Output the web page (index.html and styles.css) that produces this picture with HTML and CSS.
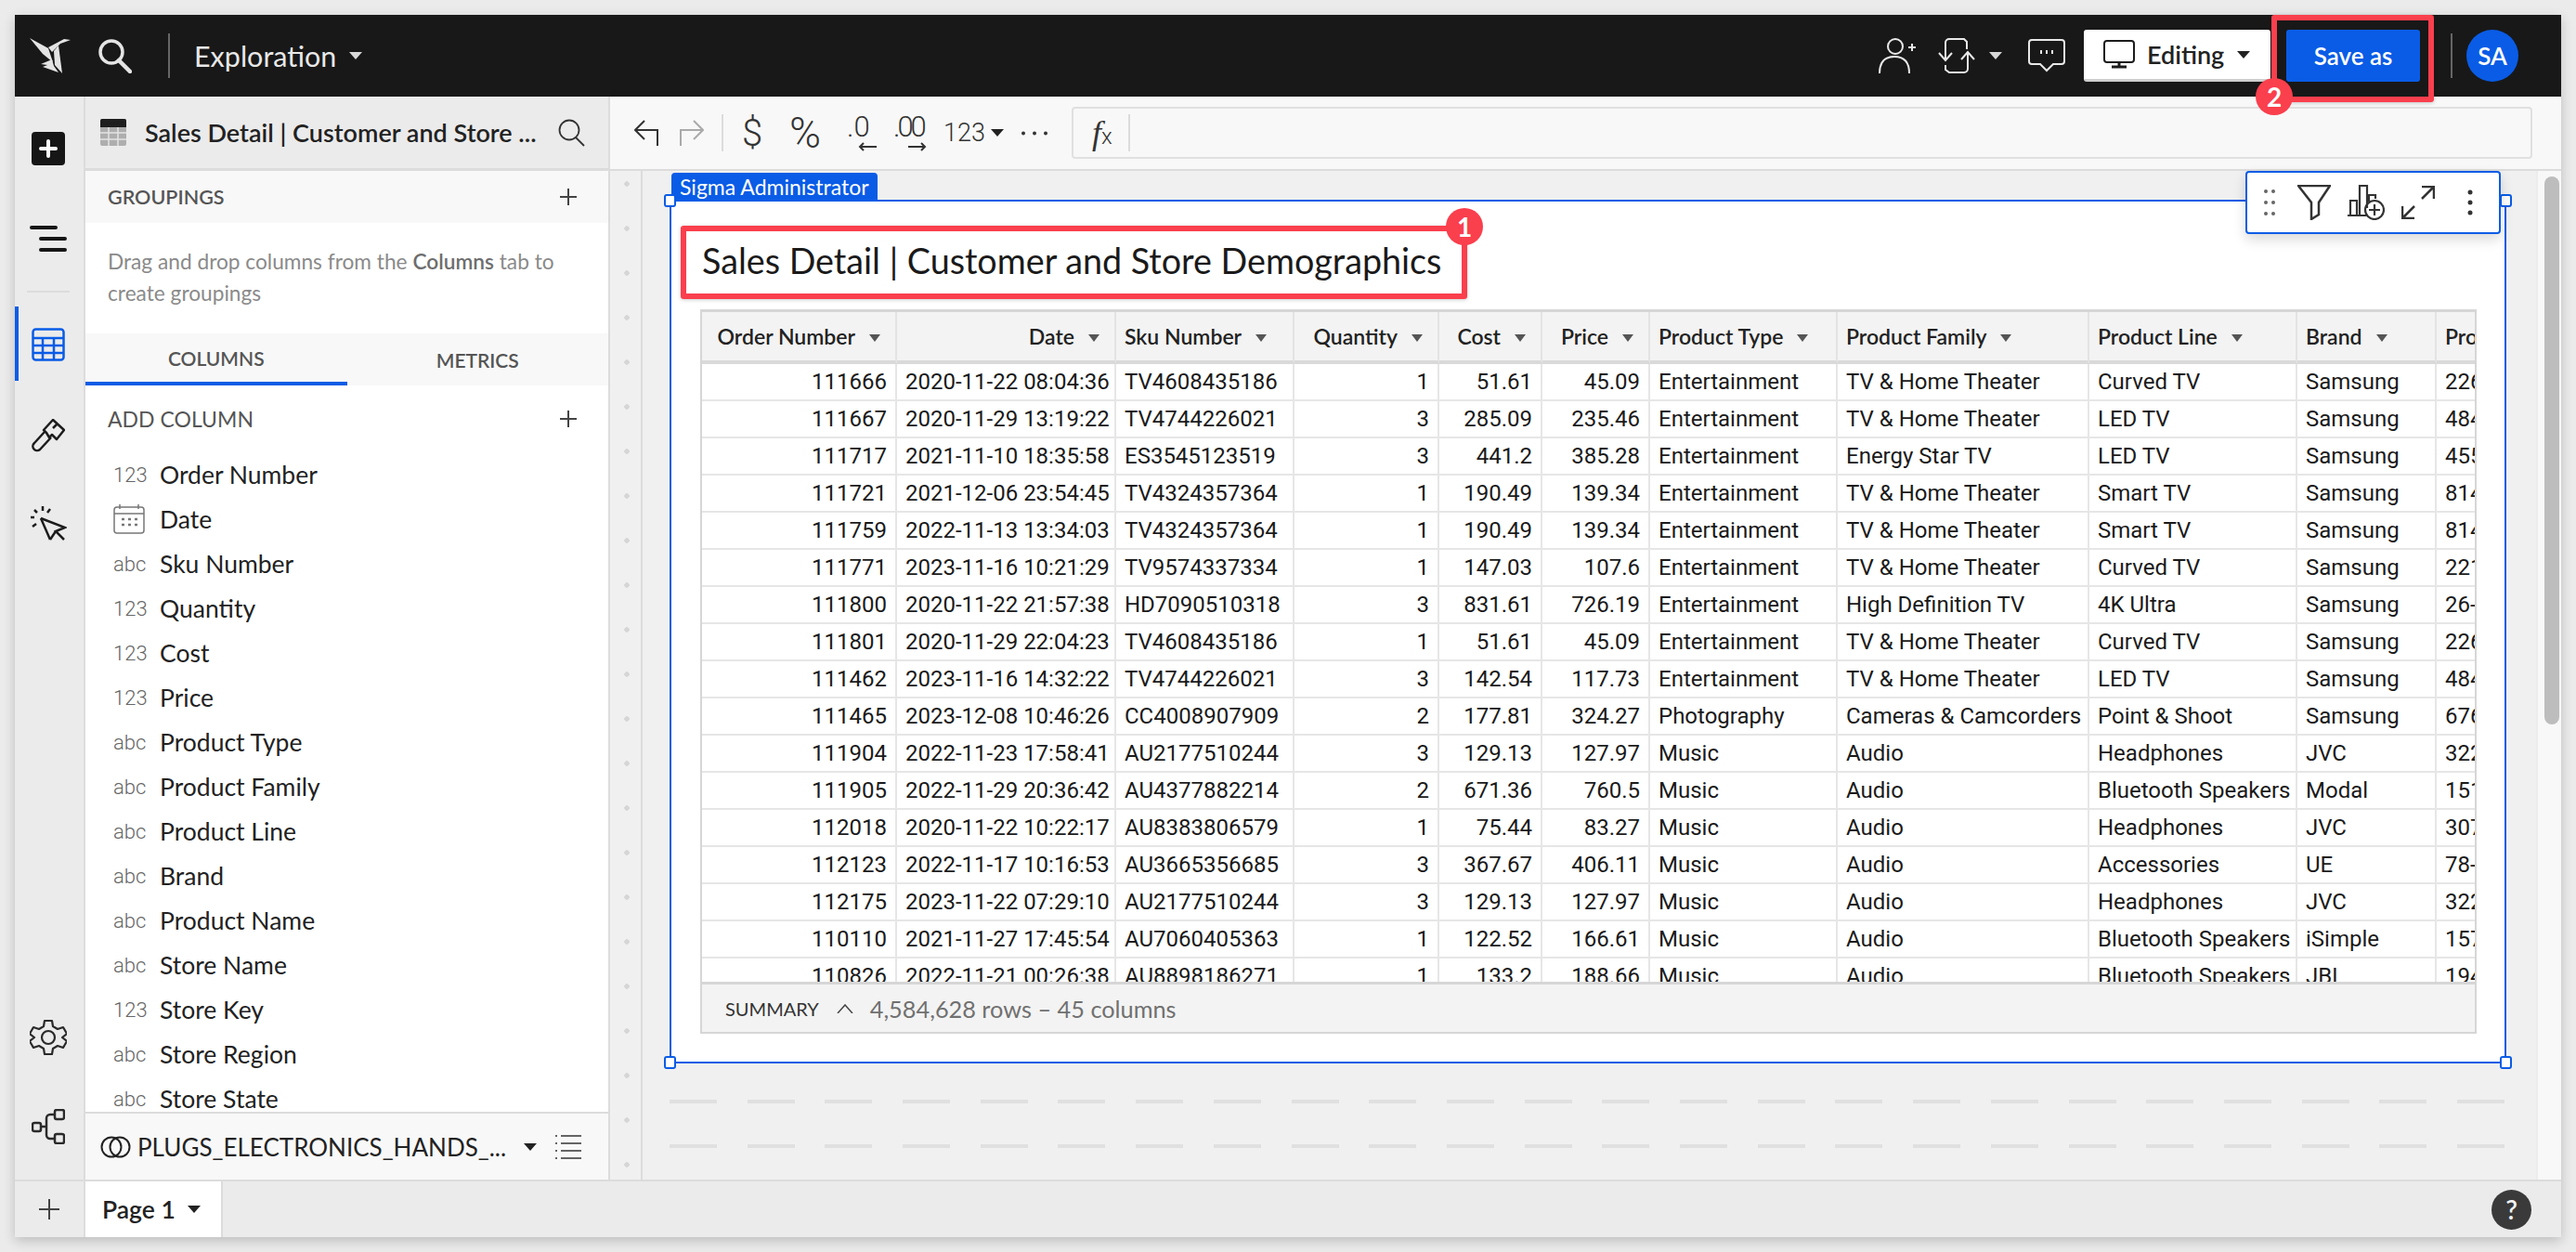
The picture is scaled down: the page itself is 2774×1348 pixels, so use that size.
FILE: index.html
```html
<!DOCTYPE html>
<html lang="en">
<head>
    <meta charset="UTF-8">
    <title>Sales Detail | Customer and Store Demographics</title>
    <link rel="stylesheet" href="styles.css">
</head>
<body>
<div class="window">
    <header class="topbar">
        <svg class="logo" width="45" height="40" viewBox="0 0 45 40" fill="#e4e4e4"><path d="M0 1 20 12 25 27 14 18Z"/><path d="M20 11 37 2 44 3 33 7 27 13 24 16Z"/><path d="M26 15 31 9 35 39 27 30Z"/><path d="M12 29 24 24 26 31 31 38 14 32 19 30Z"/></svg>
        <svg class="top-search" width="36" height="37" viewBox="0 0 36 37" fill="none" stroke="#e4e4e4"><circle cx="14" cy="14" r="12" stroke-width="3.5"/><path d="M22 23 34 35" stroke-width="4.5" stroke-linecap="round"/></svg>
        <span class="top-divider top-divider-left"></span>
        <span class="top-title">Exploration</span>
        <span class="caret caret-light top-title-caret"></span>
        <span class="top-spacer"></span>
        <svg width="40" height="38" viewBox="0 0 40 38" fill="none" stroke="#e8e8e8" stroke-width="2"><circle cx="18" cy="9" r="8"/><path d="M1 38C1 24 8 20 17 20S33 24 33 38M32 10h8M36 6v8"/></svg>
        <svg class="top-sync" width="40" height="40" viewBox="0 0 40 40" fill="none" stroke="#e8e8e8" stroke-width="2"><path d="M8 24V6a4 4 0 0 1 4-4h16l3 3v8M1 17l7 8 7-8"/><path d="M32 17v17a4 4 0 0 1-4 4H12l-4-3v-5M25 24l7-8 7 8"/></svg>
        <span class="caret caret-light top-sync-caret"></span>
        <svg class="top-comment" width="40" height="36" viewBox="0 0 40 36" fill="none" stroke="#e8e8e8" stroke-width="2"><path d="M4 1h32a3 3 0 0 1 3 3v20a3 3 0 0 1-3 3H27l-7 7-7-7H4a3 3 0 0 1-3-3V4a3 3 0 0 1 3-3Z"/><path d="M13 14h2M19 14h2M25 14h2" stroke-width="4"/></svg>
        <button class="editing-btn">
            <svg width="34" height="31" viewBox="0 0 34 31" fill="none" stroke="#1c1c1c"><rect x="1" y="1" width="32" height="23" rx="3" stroke-width="2"/><path d="M17 24v4M9 29h16" stroke-width="3"/></svg>
            <span class="editing-label">Editing</span>
            <span class="caret caret-dark"></span>
        </button>
        <button class="save-btn">Save as</button>
        <span class="top-divider top-divider-right"></span>
        <span class="avatar">SA</span>
        <div class="callout callout-save"><span class="badge badge-save">2</span></div>
    </header>

    <div class="main">
        <nav class="rail">
            <span class="rail-active"></span>
            <svg class="rail-plus" width="36" height="36" viewBox="0 0 36 36"><rect width="36" height="36" rx="4" fill="#161616"/><path d="M18 10v16M10 18h16" stroke="#fff" stroke-width="4" stroke-linecap="round"/></svg>
            <svg class="rail-outline" width="40" height="28" viewBox="0 0 40 28" stroke="#161616" stroke-width="4" stroke-linecap="round"><path d="M2 2h26M12 14h26M12 26h26"/></svg>
            <span class="rail-sep"></span>
            <svg class="rail-table" width="36" height="36" viewBox="0 0 36 36" fill="none" stroke="#0a5ce6" stroke-width="2.5"><rect x="1.5" y="1.5" width="33" height="33" rx="3"/><path d="M1.500 11h33M1.500 19h33M1.500 27h33M12 11v24M24 11v24"/></svg>
            <svg class="rail-brush" width="36" height="36" viewBox="0 0 36 36" fill="none" stroke="#1c1c1c" stroke-width="2.500" stroke-linejoin="round"><path d="M23 1 35 12 27 22 22 17 19 20 16 15 13 12Z"/><path d="M14 14 3 26a4 4 0 0 0 6 7L21 20"/><path d="M23 10 28 5"/></svg>
            <svg class="rail-cursor" width="40" height="38" viewBox="0 0 40 38" fill="none" stroke="#1c1c1c" stroke-width="2.500"><path d="M12 14 38 24 28 28 37 37M28 28 22 37Z"/><path d="M12 14 22 37M1 13h4M3 23l4-3M5 5l3 3M14 1v5M22 4l-3 4"/></svg>
            <span class="rail-spacer"></span>
            <svg class="rail-gear" width="40" height="40" viewBox="0 0 40 40" fill="none" stroke="#2a2a2a" stroke-width="2.200" stroke-linejoin="round"><circle cx="20" cy="20" r="7"/><path d="M16 2h8l1 6 5 3 6-2 4 7-5 4 0 0 5 4-4 7-6-2-5 3-1 6h-8l-1-6-5-3-6 2-4-7 5-4-5-4 4-7 6 2 5-3Z"/></svg>
            <svg class="rail-tree" width="36" height="38" viewBox="0 0 36 38" fill="none" stroke="#2a2a2a" stroke-width="2.500"><rect x="1" y="15" width="9" height="9" rx="2"/><rect x="25" y="1" width="10" height="10" rx="2"/><rect x="25" y="27" width="10" height="10" rx="2"/><path d="M10 19h6M25 6h-5a4 4 0 0 0-4 4v18a4 4 0 0 0 4 4h5"/></svg>
        </nav>

        <aside class="panel">
            <div class="panel-head">
                <svg width="28" height="29" viewBox="0 0 28 29"><rect width="28" height="29" rx="2" fill="#aeaeae"/><path d="M0 2a2 2 0 0 1 2-2h24a2 2 0 0 1 2 2v7H0Z" fill="#1f1f1f"/><path d="M0 15h28M0 22h28M9 9v20M19 9v20" stroke="#e4e4e4" stroke-width="1.500"/></svg>
                <span class="panel-title">Sales Detail | Customer and Store ...</span>
                <svg width="29" height="30" viewBox="0 0 29 30" fill="none" stroke="#333" stroke-width="1.800"><circle cx="12" cy="12" r="10.500"/><path d="M19 20 28 29"/></svg>
            </div>
            <div class="section-head">
                <span class="section-label">GROUPINGS</span>
                <span class="plus"></span>
            </div>
            <p class="groupings-help">Drag and drop columns from the <b>Columns</b> tab to create groupings</p>
            <div class="tabs">
                <span class="tab tab-active">COLUMNS</span>
                <span class="tab">METRICS</span>
            </div>
            <div class="add-column">
                <span class="add-label">ADD COLUMN</span>
                <span class="plus"></span>
            </div>
            <ul class="fields">
                <li><span class="type">123</span>Order Number</li>
                <li><svg class="type-date" width="34" height="32" viewBox="0 0 34 32" fill="none" stroke="#777" stroke-width="1.500"><rect x="1" y="3" width="32" height="28" rx="3"/><path d="M1 10h32M7 0v5M27 0v5"/><path d="M9 16h3M16 16h3M23 16h3M9 22h3M16 22h3M23 22h3" stroke-width="2.500"/></svg>Date</li>
                <li><span class="type">abc</span>Sku Number</li>
                <li><span class="type">123</span>Quantity</li>
                <li><span class="type">123</span>Cost</li>
                <li><span class="type">123</span>Price</li>
                <li><span class="type">abc</span>Product Type</li>
                <li><span class="type">abc</span>Product Family</li>
                <li><span class="type">abc</span>Product Line</li>
                <li><span class="type">abc</span>Brand</li>
                <li><span class="type">abc</span>Product Name</li>
                <li><span class="type">abc</span>Store Name</li>
                <li><span class="type">123</span>Store Key</li>
                <li><span class="type">abc</span>Store Region</li>
                <li><span class="type">abc</span>Store State</li>
            </ul>
            <div class="source-bar">
                <svg width="33" height="24" viewBox="0 0 33 24" fill="none" stroke="#222" stroke-width="2"><circle cx="12" cy="12" r="10.500"/><circle cx="21" cy="12" r="10.500"/></svg>
                <span class="source-name">PLUGS_ELECTRONICS_HANDS_...</span>
                <span class="caret caret-dark"></span>
                <svg class="source-list" width="28" height="28" viewBox="0 0 28 28" stroke="#333" stroke-width="1.500"><path d="M6 2h22M6 10h22M6 18h22M6 26h22M0 2h2M0 10h2M0 18h2M0 26h2"/></svg>
            </div>
        </aside>

        <section class="work">
            <div class="toolbar">
                <svg width="26" height="28" viewBox="0 0 26 28" fill="none" stroke="#333" stroke-width="2"><path d="M25 28V11H2M11 1 1 11l10 10"/></svg>
                <svg class="tb-redo" width="26" height="28" viewBox="0 0 26 28" fill="none" stroke="#aaa" stroke-width="2"><path d="M1 28V11h23M15 1l10 10-10 10"/></svg>
                <span class="tb-divider"></span>
                <span class="tb-dollar">$</span>
                <span class="tb-percent">%</span>
                <span class="tb-dec tb-dec-less">.0<svg width="20" height="10" viewBox="0 0 20 10" fill="none" stroke="#333" stroke-width="2"><path d="M20 5H2M6 1 2 5l4 4"/></svg></span>
                <span class="tb-dec tb-dec-more">.00<svg width="20" height="10" viewBox="0 0 20 10" fill="none" stroke="#333" stroke-width="2"><path d="M0 5h18M14 1l4 4-4 4"/></svg></span>
                <span class="tb-format">123</span>
                <span class="caret caret-dark tb-format-caret"></span>
                <svg class="tb-more" width="30" height="5" viewBox="0 0 30 5" fill="#333"><circle cx="3" cy="2.500" r="2"/><circle cx="15" cy="2.500" r="2"/><circle cx="27" cy="2.500" r="2"/></svg>
                <div class="formula">
                    <span class="fx"><i>f</i>x</span>
                    <span class="fx-divider"></span>
                </div>
            </div>
            <div class="canvas-row">
                <div class="ruler"></div>
                <div class="canvas">
                    <div class="element">
                        <span class="owner-label">Sigma Administrator</span>
                        <span class="handle handle-tl"></span>
                        <span class="handle handle-tr"></span>
                        <span class="handle handle-bl"></span>
                        <span class="handle handle-br"></span>
                        <div class="float-tools">
                            <svg class="ft-drag" width="12" height="28" viewBox="0 0 12 28" fill="#666"><circle cx="2" cy="2" r="2"/><circle cx="10" cy="2" r="2"/><circle cx="2" cy="14" r="2"/><circle cx="10" cy="14" r="2"/><circle cx="2" cy="26" r="2"/><circle cx="10" cy="26" r="2"/></svg>
                            <svg class="ft-filter" width="36" height="38" viewBox="0 0 36 38" fill="none" stroke="#333" stroke-width="2.500"><path d="M1 1h34L23 19v13l-8 5V19Z"/></svg>
                            <svg class="ft-chart" width="40" height="38" viewBox="0 0 40 38" fill="none" stroke="#333" stroke-width="2.200"><path d="M0 33h20M3 33V17h7v16M13 33V1h8v24M23 18V11h7v4"/><circle cx="29" cy="27" r="10"/><path d="M29 21v12M23 27h12"/></svg>
                            <svg class="ft-expand" width="36" height="36" viewBox="0 0 36 36" fill="none" stroke="#333" stroke-width="2.500"><path d="M22 14 35 1M22 1h13v13M14 22 1 35M1 22v13h13"/></svg>
                            <svg class="ft-kebab" width="6" height="28" viewBox="0 0 6 28" fill="#333"><circle cx="3" cy="3" r="2.500"/><circle cx="3" cy="14" r="2.500"/><circle cx="3" cy="25" r="2.500"/></svg>
                        </div>
                        <h1 class="element-title">Sales Detail | Customer and Store Demographics</h1>
                        <div class="callout callout-title"><span class="badge badge-title">1</span></div>
                        <div class="widget">
                            <div class="grid">
                                <table>
                                    <colgroup><col class="c-order"><col class="c-date"><col class="c-sku"><col class="c-qty"><col class="c-cost"><col class="c-price"><col class="c-type"><col class="c-family"><col class="c-line"><col class="c-brand"><col class="c-name"></colgroup>
                                    <thead>
                                        <tr>
                                            <th class="num">Order Number<span class="caret caret-gray"></span></th>
                                            <th class="num">Date<span class="caret caret-gray"></span></th>
                                            <th>Sku Number<span class="caret caret-gray"></span></th>
                                            <th class="num">Quantity<span class="caret caret-gray"></span></th>
                                            <th class="num">Cost<span class="caret caret-gray"></span></th>
                                            <th class="num">Price<span class="caret caret-gray"></span></th>
                                            <th>Product Type<span class="caret caret-gray"></span></th>
                                            <th>Product Family<span class="caret caret-gray"></span></th>
                                            <th>Product Line<span class="caret caret-gray"></span></th>
                                            <th>Brand<span class="caret caret-gray"></span></th>
                                            <th>Product Name</th>
                                        </tr>
                                    </thead>
                                    <tbody>
                                        <tr><td class="num">111666</td><td class="num">2020-11-22 08:04:36</td><td>TV4608435186</td><td class="num">1</td><td class="num">51.61</td><td class="num">45.09</td><td>Entertainment</td><td>TV &amp; Home Theater</td><td>Curved TV</td><td>Samsung</td><td>2260</td></tr>
                                        <tr><td class="num">111667</td><td class="num">2020-11-29 13:19:22</td><td>TV4744226021</td><td class="num">3</td><td class="num">285.09</td><td class="num">235.46</td><td>Entertainment</td><td>TV &amp; Home Theater</td><td>LED TV</td><td>Samsung</td><td>4844</td></tr>
                                        <tr><td class="num">111717</td><td class="num">2021-11-10 18:35:58</td><td>ES3545123519</td><td class="num">3</td><td class="num">441.2</td><td class="num">385.28</td><td>Entertainment</td><td>Energy Star TV</td><td>LED TV</td><td>Samsung</td><td>4555</td></tr>
                                        <tr><td class="num">111721</td><td class="num">2021-12-06 23:54:45</td><td>TV4324357364</td><td class="num">1</td><td class="num">190.49</td><td class="num">139.34</td><td>Entertainment</td><td>TV &amp; Home Theater</td><td>Smart TV</td><td>Samsung</td><td>8144</td></tr>
                                        <tr><td class="num">111759</td><td class="num">2022-11-13 13:34:03</td><td>TV4324357364</td><td class="num">1</td><td class="num">190.49</td><td class="num">139.34</td><td>Entertainment</td><td>TV &amp; Home Theater</td><td>Smart TV</td><td>Samsung</td><td>8144</td></tr>
                                        <tr><td class="num">111771</td><td class="num">2023-11-16 10:21:29</td><td>TV9574337334</td><td class="num">1</td><td class="num">147.03</td><td class="num">107.6</td><td>Entertainment</td><td>TV &amp; Home Theater</td><td>Curved TV</td><td>Samsung</td><td>2217</td></tr>
                                        <tr><td class="num">111800</td><td class="num">2020-11-22 21:57:38</td><td>HD7090510318</td><td class="num">3</td><td class="num">831.61</td><td class="num">726.19</td><td>Entertainment</td><td>High Definition TV</td><td>4K Ultra</td><td>Samsung</td><td>26-6</td></tr>
                                        <tr><td class="num">111801</td><td class="num">2020-11-29 22:04:23</td><td>TV4608435186</td><td class="num">1</td><td class="num">51.61</td><td class="num">45.09</td><td>Entertainment</td><td>TV &amp; Home Theater</td><td>Curved TV</td><td>Samsung</td><td>2260</td></tr>
                                        <tr><td class="num">111462</td><td class="num">2023-11-16 14:32:22</td><td>TV4744226021</td><td class="num">3</td><td class="num">142.54</td><td class="num">117.73</td><td>Entertainment</td><td>TV &amp; Home Theater</td><td>LED TV</td><td>Samsung</td><td>4844</td></tr>
                                        <tr><td class="num">111465</td><td class="num">2023-12-08 10:46:26</td><td>CC4008907909</td><td class="num">2</td><td class="num">177.81</td><td class="num">324.27</td><td>Photography</td><td>Cameras &amp; Camcorders</td><td>Point &amp; Shoot</td><td>Samsung</td><td>6760</td></tr>
                                        <tr><td class="num">111904</td><td class="num">2022-11-23 17:58:41</td><td>AU2177510244</td><td class="num">3</td><td class="num">129.13</td><td class="num">127.97</td><td>Music</td><td>Audio</td><td>Headphones</td><td>JVC</td><td>3222</td></tr>
                                        <tr><td class="num">111905</td><td class="num">2022-11-29 20:36:42</td><td>AU4377882214</td><td class="num">2</td><td class="num">671.36</td><td class="num">760.5</td><td>Music</td><td>Audio</td><td>Bluetooth Speakers</td><td>Modal</td><td>1511</td></tr>
                                        <tr><td class="num">112018</td><td class="num">2020-11-22 10:22:17</td><td>AU8383806579</td><td class="num">1</td><td class="num">75.44</td><td class="num">83.27</td><td>Music</td><td>Audio</td><td>Headphones</td><td>JVC</td><td>3077</td></tr>
                                        <tr><td class="num">112123</td><td class="num">2022-11-17 10:16:53</td><td>AU3665356685</td><td class="num">3</td><td class="num">367.67</td><td class="num">406.11</td><td>Music</td><td>Audio</td><td>Accessories</td><td>UE</td><td>78-1</td></tr>
                                        <tr><td class="num">112175</td><td class="num">2023-11-22 07:29:10</td><td>AU2177510244</td><td class="num">3</td><td class="num">129.13</td><td class="num">127.97</td><td>Music</td><td>Audio</td><td>Headphones</td><td>JVC</td><td>3222</td></tr>
                                        <tr><td class="num">110110</td><td class="num">2021-11-27 17:45:54</td><td>AU7060405363</td><td class="num">1</td><td class="num">122.52</td><td class="num">166.61</td><td>Music</td><td>Audio</td><td>Bluetooth Speakers</td><td>iSimple</td><td>1577</td></tr>
                                        <tr><td class="num">110826</td><td class="num">2022-11-21 00:26:38</td><td>AU8898186271</td><td class="num">1</td><td class="num">133.2</td><td class="num">188.66</td><td>Music</td><td>Audio</td><td>Bluetooth Speakers</td><td>JBL</td><td>1944</td></tr>
                                    </tbody>
                                </table>
                            </div>
                            <div class="summary">
                                <span class="summary-label">SUMMARY</span>
                                <svg class="summary-chevron" width="18" height="10" viewBox="0 0 18 10" fill="none" stroke="#444" stroke-width="1.500"><path d="M1 10 9 1l8 9"/></svg>
                                <span class="summary-count">4,584,628 rows – 45 columns</span>
                            </div>
                        </div>
                    </div>
                    <div class="empty-row"></div>
                    <div class="empty-row"></div>
                </div>
                <div class="scroll-strip"><span class="scroll-thumb"></span></div>
            </div>
        </section>
    </div>

    <footer class="tabbar">
        <span class="add-page"><span class="plus plus-large"></span></span>
        <span class="page-tab">Page 1<span class="caret caret-dark"></span></span>
        <span class="help">?</span>
    </footer>
</div>
</body>
</html>
```

FILE: styles.css
```css
* {
    box-sizing: border-box;
}
html, body {
    height: 100%;
}
body {
    margin: 0;
    padding: 16px;
    background-color: #ebebeb;
    color: #1a1a1a;
    font-family: "Lato", "Noto Sans", sans-serif;
    overflow: hidden;
}
svg {
    display: block;
    flex: none;
}

.window {
    height: 1316px;
    display: flex;
    flex-direction: column;
    background-color: #ebebeb;
    box-shadow: 0 4px 12px rgba(0, 0, 0, 0.2);
}

/* carets */
.caret {
    display: inline-block;
    flex: none;
    width: 0;
    height: 0;
    border-left: 7px solid transparent;
    border-right: 7px solid transparent;
    border-top: 8px solid #222;
}
.caret-light {
    border-top-color: #d8d8d8;
}
.caret-gray {
    border-left-width: 6px;
    border-right-width: 6px;
    border-top-color: #555;
    margin-left: 15px;
    vertical-align: 3px;
}

/* top bar */
.topbar {
    height: 88px;
    flex: none;
    display: flex;
    align-items: center;
    padding: 0 46px 0 16px;
    background-color: #181818;
    position: relative;
}
.top-search {
    margin-left: 29px;
}
.top-divider {
    width: 2px;
    height: 48px;
    background-color: #666;
}
.top-divider-left {
    margin-left: 39px;
}
.top-divider-right {
    margin-left: 33px;
}
.top-title {
    margin-left: 26px;
    font-size: 30.5px;
    color: #e8e8e8;
}
.top-title-caret {
    margin-left: 14px;
}
.top-spacer {
    flex: 1;
}
.top-sync {
    margin-left: 24px;
}
.top-sync-caret {
    margin-left: 15px;
}
.top-comment {
    margin-left: 28px;
}
.editing-btn {
    width: 201px;
    height: 56px;
    margin-left: 20px;
    padding: 0 0 0 21px;
    display: flex;
    align-items: center;
    background-color: #fff;
    border: none;
    border-bottom: 3px solid #cfcfcf;
    border-radius: 3px;
    font-family: inherit;
}
.editing-label {
    margin-left: 13px;
    margin-right: 14px;
    font-size: 27px;
    font-weight: 600;
    color: #222;
}
.save-btn {
    width: 144px;
    height: 56px;
    margin-left: 17px;
    background-color: #0a5ce6;
    border: none;
    border-radius: 3px;
    color: #fff;
    font-family: inherit;
    font-size: 26px;
    font-weight: 600;
}
.avatar {
    width: 56px;
    height: 56px;
    margin-left: 15px;
    display: flex;
    align-items: center;
    justify-content: center;
    border-radius: 50%;
    background-color: #0a5ce6;
    color: #fff;
    font-size: 26px;
    font-weight: 600;
}

/* red annotations */
.callout {
    position: absolute;
    border: 6px solid #fa3f4d;
    border-radius: 3px;
    box-shadow: 0 1px 4px rgba(0, 0, 0, 0.2);
    z-index: 5;
}
.callout-save {
    left: 2430px;
    top: 0;
    width: 175px;
    height: 94px;
}
.callout-title {
    left: 10px;
    top: 26px;
    width: 847px;
    height: 79px;
}
.badge {
    position: absolute;
    width: 40px;
    height: 40px;
    display: flex;
    align-items: center;
    justify-content: center;
    border-radius: 50%;
    background-color: #fa3f4d;
    color: #fff;
    font-size: 28px;
    font-weight: 700;
}
.badge-save {
    left: -23px;
    top: 62px;
}
.badge-title {
    right: -23px;
    top: -25px;
}

/* main */
.main {
    flex: 1;
    min-height: 0;
    display: flex;
}
.rail {
    width: 76px;
    flex: none;
    display: flex;
    flex-direction: column;
    align-items: center;
    position: relative;
    padding-right: 2px;
    background-color: #ebebeb;
    border-right: 2px solid #dcdcdc;
}
.rail-active {
    position: absolute;
    left: 0;
    top: 226px;
    width: 4px;
    height: 80px;
    background-color: #0a5ce6;
}
.rail-plus {
    margin-top: 38px;
}
.rail-outline {
    margin-top: 65px;
}
.rail-sep {
    width: 46px;
    height: 2px;
    margin-top: 42px;
    background-color: #dcdcdc;
}
.rail-table {
    margin-top: 38px;
}
.rail-brush {
    margin-top: 62px;
}
.rail-cursor {
    margin-top: 57px;
}
.rail-spacer {
    flex: 1;
}
.rail-tree {
    margin-top: 57px;
    margin-bottom: 38px;
}

/* side panel */
.panel {
    width: 565px;
    flex: none;
    display: flex;
    flex-direction: column;
    background-color: #fff;
    border-right: 2px solid #dcdcdc;
}
.panel-head {
    height: 80px;
    flex: none;
    display: flex;
    align-items: center;
    padding: 0 25px 0 16px;
    background-color: #ebebeb;
    border-bottom: 3px solid #dcdcdc;
}
.panel-title {
    flex: 1;
    margin-left: 20px;
    font-size: 27px;
    font-weight: 600;
    white-space: nowrap;
    color: #222;
}
.section-head {
    height: 56px;
    flex: none;
    display: flex;
    align-items: center;
    justify-content: space-between;
    padding: 0 34px 0 24px;
    background-color: #f8f8f8;
}
.section-label {
    font-size: 21.5px;
    font-weight: 600;
    color: #555;
}
.plus {
    display: block;
    flex: none;
    width: 18px;
    height: 18px;
    background:
        linear-gradient(#444, #444) center / 100% 2px no-repeat,
        linear-gradient(#444, #444) center / 2px 100% no-repeat;
}
.plus-large {
    width: 22px;
    height: 22px;
}
.groupings-help {
    height: 119px;
    flex: none;
    margin: 0;
    padding: 25px 24px 0;
    font-size: 22.7px;
    line-height: 34px;
    color: #8a8a8a;
}
.groupings-help b {
    color: #6e6e6e;
    font-weight: 600;
}
.tabs {
    height: 56px;
    flex: none;
    display: flex;
    background-color: #f8f8f8;
}
.tab {
    width: 282px;
    display: flex;
    align-items: center;
    justify-content: center;
    font-size: 21px;
    font-weight: 600;
    color: #555;
}
.tab-active {
    border-bottom: 4px solid #0a5ce6;
}
.add-column {
    height: 72px;
    flex: none;
    display: flex;
    align-items: center;
    justify-content: space-between;
    padding: 0 34px 0 24px;
}
.add-label {
    font-size: 23px;
    color: #555;
}
.fields {
    flex: 1;
    min-height: 0;
    margin: 0;
    padding: 0 0 0 30px;
    list-style: none;
    overflow: hidden;
}
.fields li {
    height: 48px;
    display: flex;
    align-items: center;
    font-size: 26.5px;
    color: #222;
}
.type {
    width: 50px;
    flex: none;
    font-family: "Roboto", sans-serif;
    font-size: 22px;
    font-weight: 300;
    color: #666;
}
.type-date {
    margin-right: 16px;
}
.source-bar {
    height: 73px;
    flex: none;
    display: flex;
    align-items: center;
    padding: 0 0 0 16px;
    background-color: #f8f8f8;
    border-top: 2px solid #dcdcdc;
}
.source-name {
    width: 416px;
    margin-left: 7px;
    font-size: 26px;
    white-space: nowrap;
    color: #222;
}
.source-list {
    margin-left: 20px;
}

/* work area */
.work {
    flex: 1;
    min-width: 0;
    display: flex;
    flex-direction: column;
}
.toolbar {
    height: 80px;
    flex: none;
    display: flex;
    align-items: center;
    padding: 0 31px 0 26px;
    background-color: #f8f8f8;
    border-bottom: 2px solid #dcdcdc;
    color: #333;
}
.tb-redo {
    margin-left: 23px;
}
.tb-divider {
    width: 2px;
    height: 40px;
    margin-left: 19px;
    background-color: #dcdcdc;
}
.tb-dollar {
    margin-left: 20px;
    width: 22px;
    font-family: "Roboto", sans-serif;
    font-size: 40px;
    font-weight: 300;
    text-align: center;
}
.tb-percent {
    margin-left: 28px;
    width: 36px;
    font-family: "Roboto", sans-serif;
    font-size: 46px;
    font-weight: 300;
    text-align: center;
}
.tb-dec {
    display: flex;
    flex-direction: column;
    align-items: flex-start;
    height: 44px;
    font-family: "Roboto", sans-serif;
    font-size: 31px;
    font-weight: 300;
    line-height: 32px;
}
.tb-dec svg {
    align-self: flex-end;
}
.tb-dec-less {
    margin-left: 27px;
    width: 32px;
}
.tb-dec-more {
    margin-left: 18px;
    width: 36px;
    letter-spacing: -3px;
}
.tb-format {
    margin-left: 18px;
    font-family: "Roboto", sans-serif;
    font-size: 27px;
    font-weight: 300;
}
.tb-format-caret {
    margin-left: 6px;
}
.tb-more {
    margin-left: 18px;
}
.formula {
    flex: 1;
    height: 56px;
    margin-left: 25px;
    display: flex;
    align-items: center;
    padding-left: 20px;
    border: 2px solid #e0e0e0;
    border-radius: 4px;
}
.fx {
    width: 23px;
    font-family: "Roboto", sans-serif;
    font-size: 24px;
    font-weight: 300;
    white-space: nowrap;
}
.fx i {
    font-family: "Liberation Serif", serif;
    font-size: 36px;
}
.fx-divider {
    width: 2px;
    height: 40px;
    margin-left: 16px;
    background-color: #dcdcdc;
}

/* canvas */
.canvas-row {
    flex: 1;
    min-height: 0;
    display: flex;
}
.ruler {
    width: 35px;
    flex: none;
    background-color: #f0f0f0;
    background-image: radial-gradient(circle at 18px 14px, #d6d6d6 2.5px, transparent 3px);
    background-size: 100% 48px;
    border-right: 2px solid #dcdcdc;
}
.canvas {
    flex: 1;
    min-width: 0;
    padding: 31px 32px 0 29px;
    background-color: #f0f0f0;
    position: relative;
}
.element {
    height: 930px;
    position: relative;
    margin-bottom: 39px;
    padding: 0 30px 0 31px;
    background-color: #fff;
    border: 2px solid #0a5ce6;
}
.owner-label {
    position: absolute;
    left: 0;
    top: -31px;
    height: 30px;
    padding: 0 9px;
    display: flex;
    align-items: center;
    border-radius: 4px 4px 0 0;
    background-color: #0a5ce6;
    color: #fff;
    font-size: 23px;
}
.handle {
    position: absolute;
    width: 13px;
    height: 14px;
    background-color: #fff;
    border: 2px solid #0a5ce6;
    border-radius: 3px;
}
.handle-tl {
    left: -8px;
    top: -8px;
}
.handle-tr {
    right: -8px;
    top: -8px;
}
.handle-bl {
    left: -8px;
    bottom: -8px;
}
.handle-br {
    right: -8px;
    bottom: -8px;
}
.float-tools {
    position: absolute;
    right: 4px;
    top: -33px;
    width: 275px;
    height: 68px;
    display: flex;
    align-items: center;
    padding-left: 18px;
    background-color: #fff;
    border: 2px solid #0a5ce6;
    border-radius: 4px;
    box-shadow: 0 6px 14px rgba(0, 0, 0, 0.15);
    z-index: 3;
}
.ft-filter {
    margin-left: 24px;
}
.ft-chart {
    margin-left: 18px;
}
.ft-expand {
    margin-left: 18px;
}
.ft-kebab {
    margin-left: 35px;
}
.element-title {
    height: 116px;
    margin: 0;
    padding: 37px 0 0 2px;
    font-size: 37.7px;
    font-weight: 400;
    line-height: 54px;
    color: #1a1a1a;
    white-space: nowrap;
}

/* table widget */
.widget {
    height: 780px;
    display: flex;
    flex-direction: column;
    border: 2px solid #d6d6d6;
    border-top-width: 3px;
}
.grid {
    flex: 1;
    min-height: 0;
    overflow: hidden;
}
table {
    width: 2118px;
    table-layout: fixed;
    border-collapse: separate;
    border-spacing: 0;
}
.c-order { width: 210px; }
.c-date { width: 236px; }
.c-sku { width: 192px; }
.c-qty { width: 156px; }
.c-cost { width: 111px; }
.c-price { width: 116px; }
.c-type { width: 202px; }
.c-family { width: 271px; }
.c-line { width: 224px; }
.c-brand { width: 150px; }
.c-name { width: 250px; }
th {
    height: 56px;
    padding: 0 16px 0 9px;
    background-color: #f3f3f3;
    border-right: 2px solid #e3e3e3;
    border-bottom: 4px solid #d9d9d9;
    font-size: 23px;
    font-weight: 600;
    text-align: left;
    white-space: nowrap;
    color: #222;
}
td {
    height: 40px;
    padding: 0 9px;
    border-right: 2px solid #e6e6e6;
    border-bottom: 2px solid #e6e6e6;
    font-family: "Roboto", sans-serif;
    font-size: 24px;
    white-space: nowrap;
    overflow: hidden;
    color: #1a1a1a;
}
th.num {
    text-align: right;
}
td.num {
    text-align: right;
}
.summary {
    height: 54px;
    flex: none;
    display: flex;
    align-items: center;
    padding-left: 25px;
    background-color: #f3f3f3;
    border-top: 3px solid #d6d6d6;
}
.summary-label {
    font-size: 20px;
    color: #333;
}
.summary-chevron {
    margin-left: 19px;
}
.summary-count {
    margin-left: 18px;
    font-size: 25.3px;
    color: #707070;
}
.empty-row {
    height: 48px;
    margin-right: -2px;
    background-image: repeating-linear-gradient(to right, #e0e0e0 0, #e0e0e0 51px, transparent 51px, transparent 83.7px);
    background-size: 100% 4px;
    background-repeat: no-repeat;
    background-position: left top;
}
.scroll-strip {
    width: 27px;
    flex: none;
    padding: 6px 4px 0 7px;
    background-color: #f8f8f8;
    border-left: 2px solid #ececec;
}
.scroll-thumb {
    display: block;
    width: 16px;
    height: 590px;
    border-radius: 8px;
    background-color: #bdbdbd;
}

/* page tabs */
.tabbar {
    height: 62px;
    flex: none;
    display: flex;
    align-items: center;
    padding-right: 32px;
    background-color: #ebebeb;
    border-top: 2px solid #dcdcdc;
}
.add-page {
    width: 76px;
    height: 100%;
    display: flex;
    align-items: center;
    justify-content: center;
    border-right: 2px solid #dcdcdc;
}
.page-tab {
    width: 148px;
    height: 100%;
    display: flex;
    align-items: center;
    gap: 13px;
    padding-left: 18px;
    background-color: #fff;
    border-right: 2px solid #dcdcdc;
    font-size: 26.5px;
    font-weight: 600;
    color: #222;
}
.help {
    width: 43px;
    height: 43px;
    margin-left: auto;
    display: flex;
    align-items: center;
    justify-content: center;
    border-radius: 50%;
    background-color: #3a3a3a;
    color: #f2f2f2;
    font-size: 28px;
    font-weight: 600;
}
```
